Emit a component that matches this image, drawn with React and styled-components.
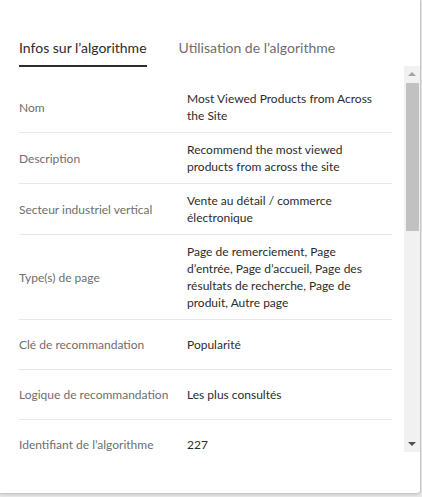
import React from "react";
import styled, { createGlobalStyle } from "styled-components";

const GlobalStyle = createGlobalStyle`
  html, body {
    margin: 0;
    padding: 0;
    background: #e9e9e9;
    font-family: Lato, "Open Sans", sans-serif;
  }
`;

const Page = styled.div`
  width: 422px;
  height: 497px;
  overflow: hidden;
`;

const Card = styled.div`
  width: 420px;
  height: 493px;
  background: #fff;
  border-right: 1px solid #c8c8c8;
  border-bottom: 1px solid #c8c8c8;
  border-bottom-right-radius: 4px;
  box-shadow: 0 1px 3px rgba(0, 0, 0, 0.12);
  display: flex;
  flex-direction: column;
`;

const Tabs = styled.div`
  display: flex;
  gap: 32px;
  padding: 38px 0 0 19px;
`;

const Tab = styled.div`
  font-size: 14px;
  line-height: 20px;
  padding-bottom: 7px;
  color: ${(p) => (p.$active ? "#2c2c2c" : "#6e6e6e")};
  border-bottom: 2px solid ${(p) => (p.$active ? "#2c2c2c" : "transparent")};
`;

const Body = styled.div`
  display: flex;
  height: 386px;
  margin-top: -1px;
  padding-left: 19px;
`;

const Table = styled.div`
  flex: 1;
  margin-right: 12px;
  padding-top: 16px;
  overflow: hidden;
`;

const Row = styled.div`
  display: grid;
  grid-template-columns: 168px 190px;
  align-items: center;
  min-height: 50px;
  box-sizing: border-box;
  padding: 8px 0;
  border-bottom: 1px solid #e8e8e8;
  font-size: 12px;
  line-height: 17px;
`;

const Label = styled.div`
  color: #6e6e6e;
`;

const Value = styled.div`
  color: #2c2c2c;
`;

const Scrollbar = styled.div`
  width: 16px;
  background: #f1f1f1;
  display: flex;
  flex-direction: column;
`;

const Arrow = styled.div`
  height: 16px;
  display: flex;
  align-items: center;
  justify-content: center;
`;

const Thumb = styled.div`
  height: 148px;
  margin: 1px 1px 0 2px;
  background: #c1c1c1;
`;

const Spacer = styled.div`
  flex: 1;
`;

const rows = [
  ["Nom", "Most Viewed Products from Across the Site"],
  ["Description", "Recommend the most viewed products from across the site"],
  ["Secteur industriel vertical", "Vente au détail / commerce électronique"],
  [
    "Type(s) de page",
    "Page de remerciement, Page d’entrée, Page d’accueil, Page des résultats de recherche, Page de produit, Autre page",
  ],
  ["Clé de recommandation", "Popularité"],
  ["Logique de recommandation", "Les plus consultés"],
  ["Identifiant de l’algorithme", "227"],
];

const Triangle = ({ up, color }) => (
  <svg width="8" height="4" viewBox="0 0 8 4">
    <path d={up ? "M0 4 L4 0 L8 4 Z" : "M0 0 L4 4 L8 0 Z"} fill={color} />
  </svg>
);

const App = () => {
  return (
    <Page>
      <GlobalStyle />
      <Card>
        <Tabs>
          <Tab $active>Infos sur l’algorithme</Tab>
          <Tab>Utilisation de l’algorithme</Tab>
        </Tabs>
        <Body>
          <Table>
            {rows.map(([label, value]) => (
              <Row key={label}>
                <Label>{label}</Label>
                <Value>{value}</Value>
              </Row>
            ))}
          </Table>
          <Scrollbar>
            <Arrow>
              <Triangle up color="#a3a3a3" />
            </Arrow>
            <Thumb />
            <Spacer />
            <Arrow>
              <Triangle color="#505050" />
            </Arrow>
          </Scrollbar>
        </Body>
      </Card>
    </Page>
  );
};

export default App;
